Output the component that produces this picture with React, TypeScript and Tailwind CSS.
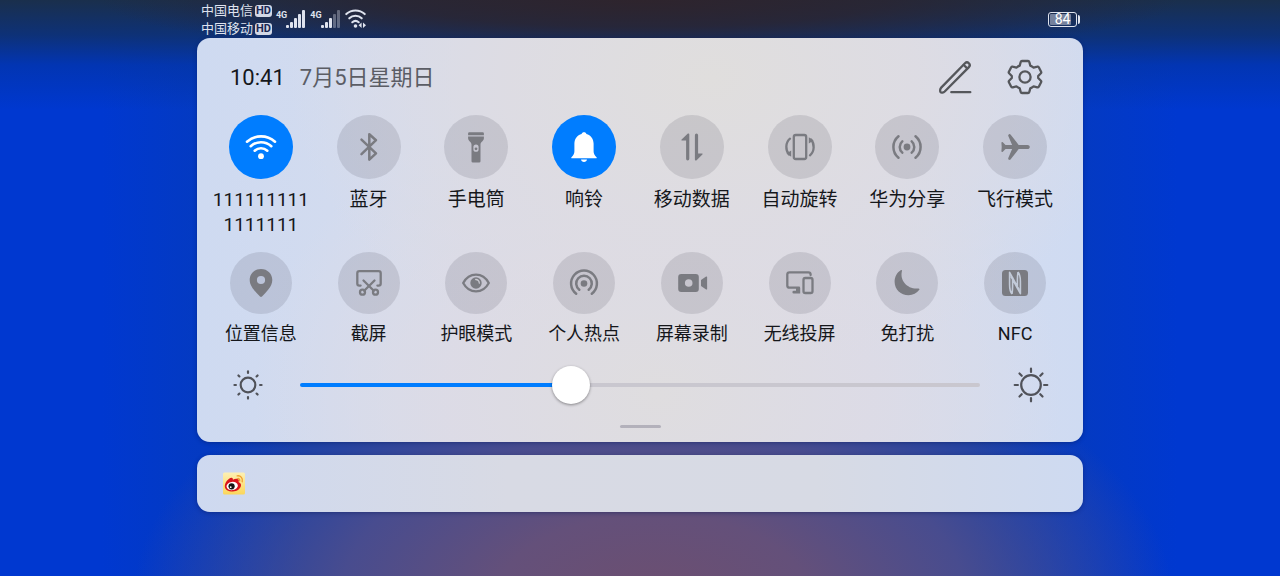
import { useState, type CSSProperties, type ReactNode } from "react";
import clsx from "clsx";

type Tile = { label: string; icon: ReactNode; on?: boolean };

const line = {
  fill: "none",
  stroke: "currentColor",
  strokeWidth: 2,
  strokeLinecap: "round",
  strokeLinejoin: "round",
} as const;

function Icon({ children }: { children: ReactNode }) {
  return (
    <svg viewBox="0 0 32 32" className="size-8" aria-hidden="true">
      {children}
    </svg>
  );
}

const primaryTiles: Tile[] = [
  {
    label: "1111111111111111",
    on: true,
    icon: (
      <Icon>
        <g {...line} strokeWidth={2.6}>
          <path d="M2 10.700a21 21 0 0 1 28 0" />
          <path d="M5.700 15.200a15.200 15.200 0 0 1 20.600 0" />
          <path d="M9.700 19.700a9.400 9.400 0 0 1 12.600 0" />
        </g>
        <circle cx="16" cy="25.200" r="2.900" fill="currentColor" />
      </Icon>
    ),
  },
  {
    label: "蓝牙",
    icon: (
      <Icon>
        <path {...line} strokeWidth={2.500} d="M8.500 8.700 23 22.400 16.300 28.600V3.200L23 9.200 8.500 23.200" />
      </Icon>
    ),
  },
  {
    label: "手电筒",
    icon: (
      <Icon>
        <path fill="currentColor" d="M9.300 1.200h13.400a1.200 1.200 0 0 1 1.200 1.200v1.800H8.100V2.400a1.200 1.200 0 0 1 1.200-1.200Z" />
        <path
          fill="currentColor"
          fillRule="evenodd"
          d="M8.100 5.400h15.800v1.800c0 2.700-3.400 3.600-3.400 6.200v16.800a1.400 1.400 0 0 1-1.400 1.400h-6.200a1.400 1.400 0 0 1-1.400-1.400V13.400c0-2.600-3.400-3.500-3.400-6.200V5.400ZM16 13.400a2.600 2.600 0 0 0-2.600 2.600v2.200a2.600 2.600 0 0 0 5.200 0V16a2.600 2.600 0 0 0-2.600-2.600Z"
        />
        <circle cx="16" cy="17.800" r="1.400" fill="currentColor" />
      </Icon>
    ),
  },
  {
    label: "响铃",
    on: true,
    icon: (
      <Icon>
        <path
          fill="currentColor"
          d="M16 1.200c1.300 0 2.100.6 2.400 1.700 4.300 1.200 7.200 5 7.200 9.600v7.800c0 2.200.8 3.900 2.900 5.900.5.500.3 1-.4 1H3.900c-.7 0-.9-.5-.4-1 2.100-2 2.900-3.700 2.900-5.900v-7.800c0-4.600 2.900-8.400 7.200-9.600.3-1.100 1.100-1.700 2.400-1.700Z"
        />
        <path fill="currentColor" d="M13 28.600h6c-.2 1.600-1.400 2.500-3 2.500s-2.800-.9-3-2.500Z" />
      </Icon>
    ),
  },
  {
    label: "移动数据",
    icon: (
      <Icon>
        <g fill="currentColor">
          <path d="M13.300 3.500v24.300a1.600 1.600 0 0 1-3.200 0V9.400H6c-.6 0-.8-.6-.4-1l6-5.600c.7-.6 1.700-.200 1.700.7Z" />
          <path d="M18.900 28.500V4.200a1.600 1.600 0 0 1 3.200 0v18.400H26c.6 0 .8.600.4 1l-5.800 5.600c-.7.600-1.700.200-1.700-.7Z" />
        </g>
      </Icon>
    ),
  },
  {
    label: "自动旋转",
    icon: (
      <Icon>
        <rect {...line} strokeWidth={2.300} x="9.800" y="4" width="12.400" height="24" rx="2" />
        <path {...line} strokeWidth={2.300} d="M6 7.700C1.300 11.500 1.300 19.500 5 23.500M26 24.300C30.700 20.500 30.700 12.500 27 8.500" />
        <path fill="currentColor" d="m2.500 22.500 4.700-3v6.300ZM29.500 9.500l-4.700 3V6.200Z" />
      </Icon>
    ),
  },
  {
    label: "华为分享",
    icon: (
      <Icon>
        <circle cx="16" cy="16" r="3.400" fill="currentColor" />
        <path
          {...line}
          strokeWidth={2.500}
          d="M11.300 10.400a7.400 7.400 0 0 0 0 11.200M20.700 10.400a7.400 7.400 0 0 1 0 11.200M7.500 5.200a14 14 0 0 0 0 21.600M24.500 5.200a14 14 0 0 1 0 21.600"
        />
      </Icon>
    ),
  },
  {
    label: "飞行模式",
    icon: (
      <Icon>
        <path
          fill="currentColor"
          d="M28.500 13.900c1.300 0 2.300.9 2.300 2.100s-1 2.100-2.300 2.100h-8.800l-8 10.200c-.4.500-1 .7-1.600.5-.8-.3-1.100-1-.8-1.700l3.800-9H6.500l-2.700 2.600c-.6.600-1.400.300-1.400-.5l.3-4.200-.3-4.200c0-.8.8-1.100 1.400-.5l2.700 2.600h6.600l-3.800-9c-.3-.7 0-1.400.8-1.700.6-.2 1.200 0 1.600.5l8 10.200Z"
        />
      </Icon>
    ),
  },
];

const secondaryTiles: Tile[] = [
  {
    label: "位置信息",
    icon: (
      <Icon>
        <path
          fill="currentColor"
          fillRule="evenodd"
          d="M16 2c6.600 0 11.300 4.900 11.300 11.100 0 6.800-6.600 12.500-10.300 16.500-.6.600-1.400.600-2 0-3.700-4-10.300-9.700-10.300-16.500C4.700 6.900 9.400 2 16 2Zm0 6.900a4.100 4.100 0 1 0 0 8.200 4.100 4.100 0 0 0 0-8.200Z"
        />
      </Icon>
    ),
  },
  {
    label: "截屏",
    icon: (
      <Icon>
        <g {...line} strokeWidth={2.300}>
          <path d="M7.600 18.600H6.400a2.100 2.100 0 0 1-2.100-2.100V6.300a2.100 2.100 0 0 1 2.100-2.100h19.200a2.100 2.100 0 0 1 2.100 2.100v10.200a2.100 2.100 0 0 1-2.100 2.100h-1.200" />
          <path d="m10.500 13.500 10.300 10.300M21.500 13.500 11.200 23.800" />
          <circle cx="9.500" cy="25.200" r="2.500" />
          <circle cx="22.500" cy="25.200" r="2.500" />
        </g>
      </Icon>
    ),
  },
  {
    label: "护眼模式",
    icon: (
      <Icon>
        <path {...line} strokeWidth={2.300} d="M3.200 16C6.200 10.400 10.700 7.600 16 7.600s9.800 2.800 12.800 8.400c-3 5.600-7.500 8.400-12.800 8.400S6.200 21.600 3.200 16Z" />
        <circle cx="16" cy="16" r="5.700" fill="currentColor" />
        <path d="M15.700 12.500a3.400 3.400 0 0 1 3.600 3.600" fill="none" stroke="#c8c8cf" strokeWidth="1.300" strokeLinecap="round" />
      </Icon>
    ),
  },
  {
    label: "个人热点",
    icon: (
      <Icon>
        <circle cx="16" cy="16.500" r="3.300" fill="currentColor" />
        <path
          {...line}
          strokeWidth={2.500}
          d="M11.300 22.700a7.800 7.800 0 1 1 9.400 0M8.200 26.700a12.900 12.900 0 1 1 15.600 0"
        />
      </Icon>
    ),
  },
  {
    label: "屏幕录制",
    icon: (
      <Icon>
        <path
          fill="currentColor"
          fillRule="evenodd"
          d="M5.200 7h14.600a3 3 0 0 1 3 3v12a3 3 0 0 1-3 3H5.200a3 3 0 0 1-3-3V10a3 3 0 0 1 3-3Zm7.500 5.200a3.800 3.800 0 1 0 0 7.600 3.800 3.800 0 0 0 0-7.600Z"
        />
        <path fill="currentColor" d="m25 13 5.100-3.400c.5-.3 1 0 1 .5v11.800c0 .5-.5.800-1 .5L25 19Z" />
      </Icon>
    ),
  },
  {
    label: "无线投屏",
    icon: (
      <Icon>
        <g {...line} strokeWidth={2.300}>
          <path d="M26.600 8V7.500a2.200 2.200 0 0 0-2.200-2.200H5.500a2.200 2.200 0 0 0-2.200 2.200v11a2.200 2.200 0 0 0 2.200 2.200H15" />
          <rect x="19.500" y="11" width="9" height="15" rx="1.800" />
        </g>
        <path fill="currentColor" d="M12 21h4.200v5.600h-6.400a1.400 1.400 0 0 1 0-2.800H12Z" />
      </Icon>
    ),
  },
  {
    label: "免打扰",
    icon: (
      <Icon>
        <path
          fill="currentColor"
          d="M9.700 3.300c.8-.5 1.500.1 1.200.9-2.300 9.700 5.900 18.300 16.500 17.200.9-.1 1.400.7.900 1.400-2.500 3.300-6.400 5.400-10.700 5.400C9.900 28.200 3.600 22.600 3.600 14.800c0-4.900 2.400-9.200 6.100-11.500Z"
        />
      </Icon>
    ),
  },
  {
    label: "NFC",
    icon: (
      <Icon>
        <rect x="3" y="3" width="26" height="26" rx="3.500" fill="currentColor" />
        <path
          fill="none"
          stroke="#c2cad8"
          strokeWidth="1.600"
          strokeLinejoin="round"
          d="M13 27c-2-2.300-2.400-4.500-2.400-9.500V5.300l9.600 17.500M19 5c2 2.300 2.400 4.500 2.400 9.500v12.200L11.800 9.200M13.600 10v9.500c0 2.500-.2 4.500-.600 7.500M18.400 22v-9.500c0-2.500.2-4.500.600-7.500"
        />
      </Icon>
    ),
  },
];

function QuickTile({ tile, small }: { tile: Tile; small?: boolean }) {
  const [on, setOn] = useState(Boolean(tile.on));

  return (
    <button
      type="button"
      aria-pressed={on}
      onClick={() => setOn(!on)}
      className={clsx("flex flex-col items-center justify-start", small ? "gap-[7px]" : "gap-2")}
    >
      <span
        className={clsx(
          "flex items-center justify-center rounded-full",
          small ? "size-[62px]" : "size-16",
          on ? "bg-[#007dff] text-white" : "bg-[#32323c]/13 text-[#7a7b81]",
        )}
      >
        {tile.icon}
      </span>
      <span
        className={clsx(
          "max-w-[100px] break-all text-center leading-[25px] text-[#15171b]",
          small ? "text-[18px]" : "text-[19px]",
        )}
      >
        {tile.label}
      </span>
    </button>
  );
}

function Carrier({ name }: { name: string }) {
  return (
    <div className="flex items-center gap-[2px] text-[13px] leading-[18px]">
      {name}
      <span className="rounded-[3px] bg-[#d3d8e6] px-[1px] text-[11px] font-bold leading-[12px] text-[#1a2752]">HD</span>
    </div>
  );
}

function Signal({ level }: { level: number }) {
  return (
    <div className="flex items-start">
      <span className="text-[9px] font-bold leading-[10px]">4G</span>
      <svg viewBox="0 0 20 18" className="-ml-[1px] h-[18px] w-5" aria-hidden="true">
        {[3, 6, 10, 14, 18].map((h, i) => (
          <rect key={h} x={i * 4} y={18 - h} width="3" height={h} rx="1" fill="currentColor" opacity={i < level ? 1 : 0.35} />
        ))}
      </svg>
    </div>
  );
}

function StatusBar() {
  return (
    <header className="flex h-[38px] items-center justify-between pl-1 pr-[3px] text-[#dfe3ee]">
      <div className="flex items-center">
        <div className="mt-[2px]">
          <Carrier name="中国电信" />
          <Carrier name="中国移动" />
        </div>
        <div className="ml-1 flex gap-1">
          <Signal level={5} />
          <Signal level={3} />
        </div>
        <svg viewBox="0 0 22 20" className="ml-1 h-5 w-[22px]" aria-hidden="true">
          <g {...line} strokeWidth={2.100}>
            <path d="M1.300 5.100a13.600 13.600 0 0 1 18.400 0" />
            <path d="M4.300 9.300a9 9 0 0 1 12.400 0" />
            <path d="M7.300 13.200a4.900 4.900 0 0 1 6.400 0" />
          </g>
          <circle cx="10.500" cy="17" r="1.800" fill="currentColor" />
          <path fill="currentColor" d="M16.600 13.500v5.500l-3-2.700ZM18 13.500v5.500l3-2.700Z" />
        </svg>
      </div>
      <div className="flex items-center gap-[1px]">
        <div className="flex h-[15px] w-[29px] rounded-[3px] border border-[#dfe3ee] p-[1px]">
          <span className="flex w-[84%] items-center justify-center rounded-[1px] bg-[#75819c] pl-1 text-[14px] leading-[11px] text-white">
            84
          </span>
        </div>
        <span className="h-[9px] w-[2px] rounded-r-sm bg-[#dfe3ee]" />
      </div>
    </header>
  );
}

type SunProps = { className: string; r: number; ray: number; stroke: number };

function Sun({ className, r, ray, stroke }: SunProps) {
  return (
    <svg viewBox="0 0 36 36" className={className} aria-hidden="true">
      <g {...line} strokeWidth={stroke}>
        <circle cx="18" cy="18" r={r} />
        {[0, 45, 90, 135, 180, 225, 270, 315].map((a) => (
          <path key={a} d={`M18 1.700v${ray}`} transform={`rotate(${a} 18 18)`} />
        ))}
      </g>
    </svg>
  );
}

function Brightness() {
  const [value, setValue] = useState(392);
  const f = value / 1000;
  // the thumb is 38px wide, so its centre runs from 19px to 100% - 19px
  const style = { "--fill": `calc(19px + (100% - 38px) * ${f})` } as CSSProperties;

  return (
    <div className="mt-5 flex items-center pl-[36px] pr-[34px] text-[#505259]">
      <Sun className="size-[30px] shrink-0" r={8.800} ray={1.800} stroke={2.600} />
      <input
        type="range"
        aria-label="亮度"
        min={0}
        max={1000}
        value={value}
        onChange={(e) => setValue(Number(e.target.value))}
        style={style}
        className="mr-[33px] ml-[37px] h-[38px] min-w-0 flex-1 cursor-pointer appearance-none bg-transparent [&::-webkit-slider-runnable-track]:h-1 [&::-webkit-slider-runnable-track]:rounded-full [&::-webkit-slider-runnable-track]:bg-[linear-gradient(to_right,#007dff_var(--fill),#c9c7cf_var(--fill))] [&::-webkit-slider-thumb]:-mt-[17px] [&::-webkit-slider-thumb]:size-[38px] [&::-webkit-slider-thumb]:appearance-none [&::-webkit-slider-thumb]:rounded-full [&::-webkit-slider-thumb]:bg-white [&::-webkit-slider-thumb]:shadow-[0_1px_3px_rgba(0,0,0,0.4)]"
      />
      <Sun className="size-9 shrink-0" r={9.800} ray={3.200} stroke={2.200} />
    </div>
  );
}

function WeiboLogo() {
  return (
    <svg viewBox="0 0 24 24" className="size-6" role="img" aria-label="微博">
      <defs>
        <linearGradient id="weibo-bg" x1="0" y1="0" x2="0" y2="1">
          <stop offset="0" stopColor="#fdf0b4" />
          <stop offset="1" stopColor="#fbd65a" />
        </linearGradient>
      </defs>
      <rect x="1" y="0.500" width="22" height="22" rx="1.500" fill="url(#weibo-bg)" />
      <path
        fill="#d9141c"
        d="M2.800 14.200c0-3.500 3.600-8.200 6.600-8.500 1.300-.1 1.700 1 1.500 2.100 2.300-1.400 5.600-1.400 5.900.5.100.6-.1 1.200-.3 1.600 1.900.7 2.700 2 2.500 3.700-.4 3.300-4 5.900-8.200 5.900-4.500 0-8-2-8-5.300Z"
      />
      <ellipse cx="10.200" cy="14" rx="5.700" ry="4.100" fill="#fff" transform="rotate(-8 10.200 14)" />
      <circle cx="9.600" cy="14.300" r="3.100" fill="#151515" />
      <circle cx="8.700" cy="15.200" r="0.900" fill="#fff" />
      <g fill="none" stroke="#f0a030" strokeWidth="1.400" strokeLinecap="round">
        <path d="M15.200 3.900c3.500-.6 6 2.500 5 5.800" />
        <path d="M15.700 6.600c1.400-.2 2.300.9 1.900 2.200" />
      </g>
    </svg>
  );
}

export default function App() {
  return (
    <div className="min-h-screen bg-[radial-gradient(ellipse_540px_60px_at_50%_0,#2e242d_0,rgba(44,36,46,0.8)_45%,transparent_100%),linear-gradient(to_bottom,#1a2f4c_0,rgba(16,48,104,0.85)_35px,rgba(4,50,150,0.5)_65px,transparent_110px),radial-gradient(ellipse_520px_280px_at_51%_104%,#6c4f70_0,#64507a_30%,rgba(88,80,134,0.8)_60%,transparent_100%),linear-gradient(to_right,#0038d0_8%,#083cb2_24%,#083cb2_76%,#0038d0_92%)] [font-family:Roboto,'Noto_Sans_CJK_SC',sans-serif]">
      <div className="mx-auto max-w-[886px]">
        <StatusBar />

        <main>
          <section className="rounded-[13px] bg-[radial-gradient(ellipse_at_58%_10%,#e0dedd_0,rgba(222,220,226,0.9)_28%,transparent_58%),radial-gradient(ellipse_at_52%_88%,#dfdddf_0,rgba(221,219,229,0.9)_32%,transparent_62%),linear-gradient(to_right,#cedaf1,#d6dced_30%,#d6dced_78%,#cfdbf2)] pt-[21px] pb-[14px] shadow-[0_1px_4px_rgba(0,20,80,0.4)]">
            <div className="flex h-9 items-center justify-between pl-[33px] pr-10">
              <div className="flex items-center gap-[15px] pt-[2px] text-[22px] leading-9">
                <time className="text-[#15171b]">10:41</time>
                <span className="text-[#5b5d65]">7月5日星期日</span>
              </div>
              <div className="flex gap-[34px] text-[#55575b]">
                <button type="button" aria-label="编辑">
                  <svg viewBox="0 0 36 36" className="size-9" aria-hidden="true">
                    <g {...line} strokeWidth={2.300}>
                      <path d="M4.200 28.600 28 4.300a2.700 2.700 0 0 1 3.900 3.800L7.700 32.500c-1.300 1.200-3.400 1.500-4.100.8s-.7-3.400.6-4.700Z" />
                      <path d="m26.800 6 3.400 3.400M14.300 33.200h19" />
                    </g>
                  </svg>
                </button>
                <button type="button" aria-label="设置">
                  <svg viewBox="0 0 36 36" className="size-9" aria-hidden="true">
                    <g {...line} strokeWidth={2.300}>
                      <path d="M15 2h6c.7 0 1.100.3 1.300 1l1 3.600c1.200.5 2.300 1.200 3.300 2l3.600-.9c.7-.2 1.200 0 1.600.6l2.300 4.500c.3.600.3 1-.2 1.500l-2.700 2.700v2l2.700 2.700c.5.500.5.900.2 1.500l-2.300 4.500c-.4.600-.9.800-1.600.6l-3.600-.9c-1 .8-2.100 1.500-3.300 2l-1 3.600c-.2.700-.6 1-1.300 1h-6c-.7 0-1.100-.3-1.300-1l-1-3.600c-1.200-.5-2.300-1.200-3.300-2l-3.600.9c-.7.200-1.200 0-1.600-.6l-2.300-4.500c-.3-.6-.3-1 .2-1.500L4.800 19v-2l-2.700-2.700c-.5-.5-.5-.9-.2-1.500l2.300-4.500c.4-.6.900-.8 1.600-.6l3.600.9c1-.8 2.100-1.500 3.300-2l1-3.600c.2-.7.6-1 1.300-1Z" />
                      <circle cx="18" cy="18" r="5.600" />
                    </g>
                  </svg>
                </button>
              </div>
            </div>

            <div className="mt-5 grid grid-cols-8 pl-[10px] pr-[14px]">
              {primaryTiles.map((t) => (
                <QuickTile key={t.label} tile={t} />
              ))}
            </div>
            <div className="mt-[15px] grid grid-cols-8 pl-[10px] pr-[14px]">
              {secondaryTiles.map((t) => (
                <QuickTile key={t.label} tile={t} small />
              ))}
            </div>

            <Brightness />
            <div className="mx-auto mt-[21px] h-[3px] w-[41px] rounded-sm bg-[#b3b1bb]" />
          </section>

          <section className="mt-[13px] flex h-[57px] items-center rounded-[13px] bg-[linear-gradient(to_right,#ced9f0,#d8dae4_35%,#d7dae4_70%,#cedaf1)] px-[25px] shadow-[0_1px_4px_rgba(0,20,80,0.4)]">
            <WeiboLogo />
          </section>
        </main>
      </div>
    </div>
  );
}
